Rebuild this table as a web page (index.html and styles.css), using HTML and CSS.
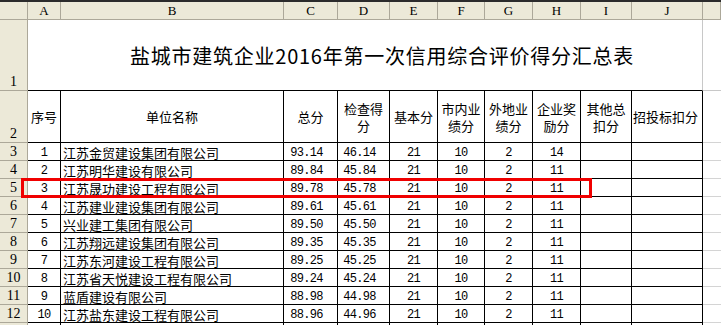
FILE: index.html
```html
<!DOCTYPE html>
<html lang="zh-CN">
<head>
<meta charset="utf-8">
<title>盐城市建筑企业2016年第一次信用综合评价得分汇总表</title>
<link rel="stylesheet" href="styles.css">
</head>
<body>
<div class="sheet">
  <div class="ch"></div>
  <div class="ch">A</div><div class="ch">B</div><div class="ch">C</div><div class="ch">D</div><div class="ch">E</div>
  <div class="ch">F</div><div class="ch">G</div><div class="ch">H</div><div class="ch">I</div><div class="ch">J</div><div class="ch"></div>

  <div class="rh">1</div>
  <div class="title">盐城市建筑企业2016年第一次信用综合评价得分汇总表</div>
  <div class="k k1"></div>

  <div class="rh">2</div>
  <div class="c hd">序号</div>
  <div class="c hd">单位名称</div>
  <div class="c hd">总分</div>
  <div class="c hd wrap"><span class="ln">检查得</span><span class="ln">分</span></div>
  <div class="c hd">基本分</div>
  <div class="c hd wrap"><span class="ln">市内业</span><span class="ln">绩分</span></div>
  <div class="c hd wrap"><span class="ln">外地业</span><span class="ln">绩分</span></div>
  <div class="c hd wrap"><span class="ln">企业奖</span><span class="ln">励分</span></div>
  <div class="c hd wrap"><span class="ln">其他总</span><span class="ln">扣分</span></div>
  <div class="c hd left">招投标扣分</div>
  <div class="k"></div>

  <div class="rh">3</div><div class="c n">1</div><div class="c name">江苏金贸建设集团有限公司</div><div class="c n s">93.14</div><div class="c n s">46.14</div><div class="c n">21</div><div class="c n">10</div><div class="c n">2</div><div class="c n">14</div><div class="c"></div><div class="c"></div><div class="k"></div>
  <div class="rh">4</div><div class="c n">2</div><div class="c name">江苏明华建设有限公司</div><div class="c n s">89.84</div><div class="c n s">45.84</div><div class="c n">21</div><div class="c n">10</div><div class="c n">2</div><div class="c n">11</div><div class="c"></div><div class="c"></div><div class="k"></div>
  <div class="rh">5</div><div class="c n">3</div><div class="c name">江苏晟功建设工程有限公司</div><div class="c n s">89.78</div><div class="c n s">45.78</div><div class="c n">21</div><div class="c n">10</div><div class="c n">2</div><div class="c n">11</div><div class="c"></div><div class="c"></div><div class="k"></div>
  <div class="rh">6</div><div class="c n">4</div><div class="c name">江苏建业建设集团有限公司</div><div class="c n s">89.61</div><div class="c n s">45.61</div><div class="c n">21</div><div class="c n">10</div><div class="c n">2</div><div class="c n">11</div><div class="c"></div><div class="c"></div><div class="k"></div>
  <div class="rh">7</div><div class="c n">5</div><div class="c name">兴业建工集团有限公司</div><div class="c n s">89.50</div><div class="c n s">45.50</div><div class="c n">21</div><div class="c n">10</div><div class="c n">2</div><div class="c n">11</div><div class="c"></div><div class="c"></div><div class="k"></div>
  <div class="rh">8</div><div class="c n">6</div><div class="c name">江苏翔远建设集团有限公司</div><div class="c n s">89.35</div><div class="c n s">45.35</div><div class="c n">21</div><div class="c n">10</div><div class="c n">2</div><div class="c n">11</div><div class="c"></div><div class="c"></div><div class="k"></div>
  <div class="rh">9</div><div class="c n">7</div><div class="c name">江苏东河建设工程有限公司</div><div class="c n s">89.25</div><div class="c n s">45.25</div><div class="c n">21</div><div class="c n">10</div><div class="c n">2</div><div class="c n">11</div><div class="c"></div><div class="c"></div><div class="k"></div>
  <div class="rh">10</div><div class="c n">8</div><div class="c name">江苏省天悦建设工程有限公司</div><div class="c n s">89.24</div><div class="c n s">45.24</div><div class="c n">21</div><div class="c n">10</div><div class="c n">2</div><div class="c n">11</div><div class="c"></div><div class="c"></div><div class="k"></div>
  <div class="rh">11</div><div class="c n">9</div><div class="c name">蓝盾建设有限公司</div><div class="c n s">88.98</div><div class="c n s">44.98</div><div class="c n">21</div><div class="c n">10</div><div class="c n">2</div><div class="c n">11</div><div class="c"></div><div class="c"></div><div class="k"></div>
  <div class="rh">12</div><div class="c n">10</div><div class="c name">江苏盐东建设工程有限公司</div><div class="c n s">88.96</div><div class="c n s">44.96</div><div class="c n">21</div><div class="c n">10</div><div class="c n">2</div><div class="c n">11</div><div class="c"></div><div class="c"></div><div class="k"></div>
  <div class="rh"></div><div class="c"></div><div class="c"></div><div class="c"></div><div class="c"></div><div class="c"></div><div class="c"></div><div class="c"></div><div class="c"></div><div class="c"></div><div class="c"></div><div class="k"></div>

  <div class="mark"></div>
</div>
</body>
</html>
```

FILE: styles.css
```css
html, body {
  margin: 0;
  padding: 0;
  background: #fff;
  overflow: hidden;
}
* { box-sizing: border-box; }

.sheet {
  position: relative;
  display: grid;
  grid-template-columns: 28px 33px 223px 54px 52px 48px 47px 48px 48px 51px 71px 1fr;
  grid-template-rows: 18px 71px 52px repeat(11, 18px);
  border-top: 2px solid #2b2b2b;
  width: 721px;
  height: 325px;
  overflow: hidden;
  color: #000;
  font-family: "Noto Sans CJK SC", "Noto Sans CJK TC", sans-serif;
  font-size: 13px;
}

.ch {
  background: #ece9d8;
  border-right: 1px solid #aca899;
  border-bottom: 1px solid #aca899;
  font-family: "Liberation Serif", serif;
  font-size: 13px;
  line-height: 17px;
  text-align: center;
}

.rh {
  background: #ece9d8;
  border-right: 1px solid #aca899;
  border-bottom: 1px solid #aca899;
  font-family: "Liberation Serif", serif;
  font-size: 14px;
  display: flex;
  align-items: flex-end;
  justify-content: center;
  line-height: 15px;
  padding-bottom: 1px;
}

.title {
  grid-column: span 10;
  border-right: 1px solid #c8c8c8;
  border-bottom: 1px solid #000;
  display: flex;
  align-items: center;
  justify-content: center;
  padding-left: 34px;
  padding-top: 1px;
  font-size: 20px;
  letter-spacing: 0.75px;
}

.k { border-bottom: 1px solid #d4d4d4; }
.k1 { border-bottom-color: #c8c8c8; }

.c {
  border-right: 1px solid #000;
  border-bottom: 1px solid #000;
  line-height: 16px;
  padding-top: 1px;
  white-space: nowrap;
  overflow: hidden;
}

.hd {
  display: flex;
  align-items: center;
  justify-content: center;
  text-align: center;
  padding-top: 0;
  line-height: 17px;
}
.hd.wrap {
  flex-direction: column;
  padding-top: 1px;
}
.ln {
  display: block;
  height: 17px;
  line-height: 17px;
}
.hd.left { justify-content: flex-start; padding-left: 1px; }

.name {
  padding-left: 2px;
  padding-top: 2px;
}

.n {
  font-family: "Liberation Mono", monospace;
  font-size: 12px;
  letter-spacing: -0.7px;
  text-align: center;
  padding-top: 2px;
}
.n.s { padding-right: 8px; }

.mark {
  position: absolute;
  left: 21px;
  top: 176px;
  width: 571px;
  height: 20px;
  border: 3px solid #f00000;
}
```
